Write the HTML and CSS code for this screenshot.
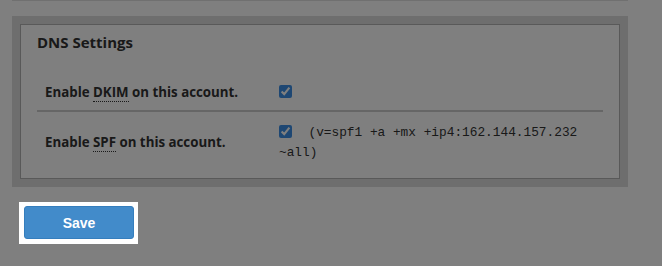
FILE: index.html
```html
<!DOCTYPE html>
<html lang="en">
<head>
  <meta charset="UTF-8">
  <title>DNS Settings</title>
  <link rel="stylesheet" href="styles.css">
</head>
<body>

<div class="page">
  <div class="rule"></div>

  <div class="panel">
    <div class="box">
      <h2>DNS Settings</h2>
      <table class="settings">
        <tr>
          <td class="label">Enable <abbr title="DomainKeys Identified Mail">DKIM</abbr> on this account.</td>
          <td class="value"><input type="checkbox" checked></td>
        </tr>
        <tr>
          <td class="label">Enable <abbr title="Sender Policy Framework">SPF</abbr> on this account.</td>
          <td class="value"><input type="checkbox" checked> <span class="record">(v=spf1 +a +mx +ip4:162.144.157.232 ~all)</span></td>
        </tr>
      </table>
    </div>
  </div>

  <div class="highlight">
    <button class="btn-save">Save</button>
  </div>
</div>

<!-- tour overlay: dims the page, the save button stays on top -->
<div class="overlay"></div>

</body>
</html>
```

FILE: styles.css
```css
body {
  margin: 0;
  background: #fff;
  font-family: "Open Sans", "Liberation Sans", sans-serif;
  color: #333;
}

.page {
  width: 616px;
  margin-left: 12px;
}

.rule {
  border-top: 1px solid #e0e0e0;
}

.panel {
  margin-top: 15px;
  background: #dcdcdc;
  padding: 8px;
}

.box {
  background: #fff;
  border: 1px solid #b2b2b2;
  padding: 7px 16px 6px;
}

h2 {
  margin: 0 0 21px;
  font-size: 15px;
  line-height: 20px;
  font-weight: 700;
}

.settings {
  width: 566px;
  table-layout: fixed;
  border-collapse: collapse;
  font-size: 13.3px;
  line-height: 18px;
}

.settings td {
  padding: 9px 8px;
  vertical-align: middle;
}

.settings tr:first-child td {
  border-bottom: 2px solid #ccc;
}

.settings tr + tr td {
  padding: 10px 8px;
}

.label {
  width: 218px;
  font-weight: 700;
}

abbr {
  text-decoration: none;
  border-bottom: 1px dotted #333;
}

.value {
  line-height: 19px;
}

.value input {
  width: 13px;
  height: 13px;
  margin: 0;
  vertical-align: -2px;
  accent-color: #3d8fe6;
}

.record {
  margin-left: 13px;
  font-family: "Liberation Mono", monospace;
  font-size: 12.8px;
  line-height: 19px;
}

.highlight {
  position: relative;
  z-index: 10;
  display: inline-block;
  margin: 15px 0 0 7px;
  padding: 4px 4px 5px 5px;
  background: #fff;
}

.btn-save {
  display: block;
  width: 110px;
  height: 33px;
  background: #428bca;
  border: 1px solid #357ebd;
  border-radius: 3px;
  color: #fff;
  font-family: "Liberation Sans", Arial, sans-serif;
  font-size: 14px;
  font-weight: 700;
  cursor: pointer;
}

.overlay {
  position: fixed;
  top: 0;
  left: 0;
  right: 0;
  bottom: 0;
  background: rgba(0, 0, 0, 0.5);
  z-index: 5;
}
```
